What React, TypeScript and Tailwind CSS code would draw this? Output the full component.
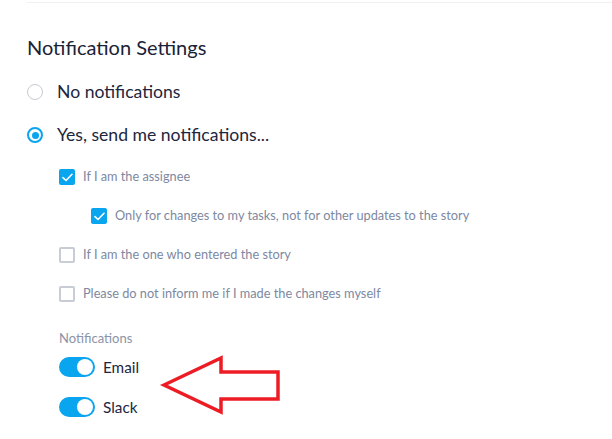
import React from "react";

function Radio({ checked }: { checked: boolean }) {
  return checked ? (
    <span className="flex h-4 w-4 items-center justify-center rounded-full border-2 border-[#0aa5ef]">
      <span className="h-[7px] w-[7px] rounded-full bg-[#0aa5ef]" />
    </span>
  ) : (
    <span className="h-4 w-4 rounded-full border-[1.5px] border-[#c7cad3]" />
  );
}

function Checkbox({ checked }: { checked: boolean }) {
  return checked ? (
    <span className="flex h-4 w-4 items-center justify-center rounded-[2px] bg-[#0aa5ef]">
      <svg width="11" height="9" viewBox="0 0 11 9" fill="none">
        <path d="M1 4.6 L4 7.5 L10 1.3" stroke="white" strokeWidth="1.6" strokeLinecap="round" strokeLinejoin="round" />
      </svg>
    </span>
  ) : (
    <span className="h-4 w-4 rounded-[2px] border-2 border-[#c8ccd5]" />
  );
}

function Toggle() {
  return (
    <span className="flex h-5 w-9 items-center justify-end rounded-full bg-[#0aa5ef] pr-[2px]">
      <span className="h-4 w-4 rounded-full bg-white" />
    </span>
  );
}

const options = [
  { label: "If I am the assignee", checked: true, indent: false },
  { label: "Only for changes to my tasks, not for other updates to the story", checked: true, indent: true },
  { label: "If I am the one who entered the story", checked: false, indent: false },
  { label: "Please do not inform me if I made the changes myself", checked: false, indent: false },
];

export default function App() {
  return (
    <div className="relative h-[439px] w-[612px] overflow-hidden bg-white font-['Lato',sans-serif]">
      <div className="flex flex-col pl-[27px]">
        <div className="mt-[2px] h-px bg-[#eef0f3]" />
        <h2 className="mt-[32px] h-6 text-[20px] leading-6 text-[#1a2236]">Notification Settings</h2>

        <label className="mt-[21px] flex h-6 items-center gap-[14px]">
          <Radio checked={false} />
          <span className="text-[17.6px] text-[#1d2640]">No notifications</span>
        </label>
        <label className="mt-[19px] flex h-6 items-center gap-[14px]">
          <Radio checked />
          <span className="text-[17.6px] text-[#1d2640]">Yes, send me notifications...</span>
        </label>

        <div className="mt-[20px] flex flex-col gap-[19px] pl-[32px]">
          {options.map((o) => (
            <label key={o.label} className={`flex h-5 items-center gap-2 ${o.indent ? "pl-8" : ""}`}>
              <Checkbox checked={o.checked} />
              <span className="text-[12.75px] text-[#7d88a1]">{o.label}</span>
            </label>
          ))}
        </div>

        <div className="mt-[25px] flex flex-col pl-[32px]">
          <span className="h-[18px] text-[13px] leading-[18px] text-[#8a93a7]">Notifications</span>
          <label className="mt-[10px] flex h-5 items-center gap-2">
            <Toggle />
            <span className="text-[15.3px] text-[#1d2640]">Email</span>
          </label>
          <label className="mt-[20px] flex h-5 items-center gap-2">
            <Toggle />
            <span className="text-[15.3px] text-[#1d2640]">Slack</span>
          </label>
        </div>
      </div>

      <svg className="pointer-events-none absolute left-0 top-0" width="612" height="439" viewBox="0 0 612 439">
        <polygon
          points="164,385 221,358 221,372 278,372 278,399 221,399 221,412"
          fill="none"
          stroke="#ed1c24"
          strokeWidth="3.5"
          strokeLinejoin="miter"
        />
      </svg>
    </div>
  );
}
